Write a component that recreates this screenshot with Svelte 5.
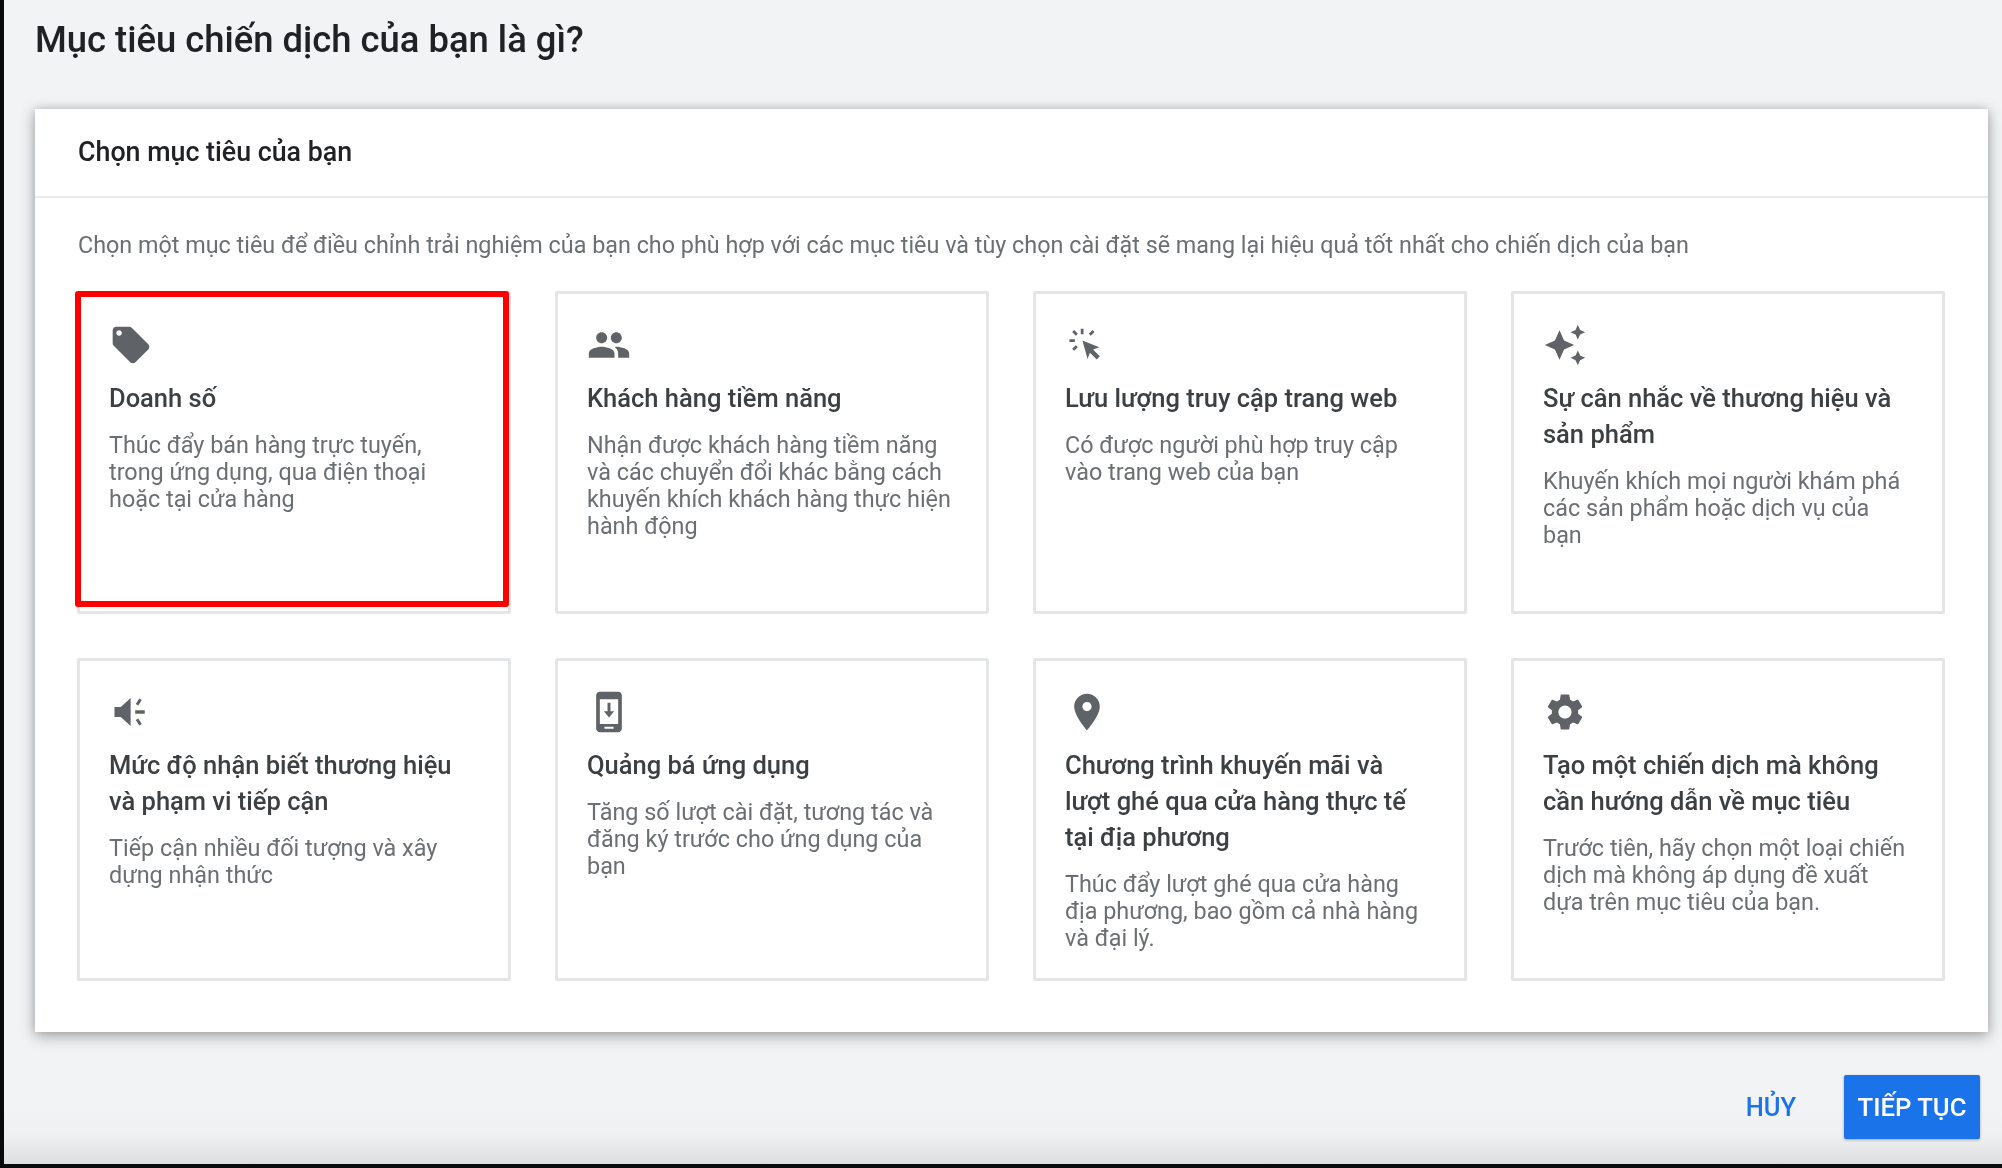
<script lang="ts">
  const goals = [
    {
      title: 'Doanh số',
      desc: 'Thúc đẩy bán hàng trực tuyến, trong ứng dụng, qua điện thoại hoặc tại cửa hàng',
      icon: 'M21.41 11.58l-9-9C12.05 2.22 11.55 2 11 2H4c-1.1 0-2 .9-2 2v7c0 .55.22 1.05.59 1.42l9 9c.36.36.86.58 1.41.58.55 0 1.05-.22 1.41-.59l7-7c.37-.36.59-.86.59-1.41 0-.55-.23-1.06-.59-1.42zM5.5 7C4.67 7 4 6.33 4 5.5S4.67 4 5.5 4 7 4.67 7 5.5 6.33 7 5.5 7z',
      selected: true
    },
    {
      title: 'Khách hàng tiềm năng',
      desc: 'Nhận được khách hàng tiềm năng và các chuyển đổi khác bằng cách khuyến khích khách hàng thực hiện hành động',
      icon: 'M16 11c1.66 0 2.99-1.34 2.99-3S17.66 5 16 5c-1.66 0-3 1.34-3 3s1.34 3 3 3zm-8 0c1.66 0 2.99-1.34 2.99-3S9.66 5 8 5C6.34 5 5 6.34 5 8s1.34 3 3 3zm0 2c-2.33 0-7 1.17-7 3.5V19h14v-2.5c0-2.33-4.67-3.5-7-3.5zm8 0c-.29 0-.62.02-.97.05 1.16.84 1.97 1.97 1.97 3.45V19h6v-2.5c0-2.33-4.67-3.5-7-3.5z'
    },
    {
      title: 'Lưu lượng truy cập trang web',
      desc: 'Có được người phù hợp truy cập vào trang web của bạn',
      icon: 'M9.5 9.5l9.2 3.7-3.4 1.3 3.7 3.7-1.7 1.7-3.7-3.7-1.3 3.4zM8.6 3.2h1.5v3H8.6zM2.4 8.8h3v1.5h-3zM3.9 4.9L5 3.8l2 2-1.1 1.1zM13 5.8l2-2 1.1 1.1-2 2zM3.9 14.1l2-2L7 13.2l-2 2z'
    },
    {
      title: 'Sự cân nhắc về thương hiệu và sản phẩm',
      desc: 'Khuyến khích mọi người khám phá các sản phẩm hoặc dịch vụ của bạn',
      icon: 'M19 9l1.25-2.75L23 5l-2.75-1.25L19 1l-1.25 2.75L15 5l2.75 1.25L19 9zm-7.5.5L9 4 6.5 9.5 1 12l5.5 2.5L9 20l2.5-5.5L17 12l-5.5-2.5zM19 15l-1.25 2.75L15 19l2.75 1.25L19 23l1.25-2.75L23 19l-2.75-1.25L19 15z'
    },
    {
      title: 'Mức độ nhận biết thương hiệu và phạm vi tiếp cận',
      desc: 'Tiếp cận nhiều đối tượng và xây dựng nhận thức',
      icon: 'M3 9.3v5.4h3.4l5.4 5V4.3l-5.4 5zM14.3 11.1h5.2v1.8h-5.2zM14.6 7.6l1.9-3 1.4.9-1.9 3zM14.6 16.4l1.4-.9 1.9 3-1.4.9z'
    },
    {
      title: 'Quảng bá ứng dụng',
      desc: 'Tăng số lượt cài đặt, tương tác và đăng ký trước cho ứng dụng của bạn',
      icon: 'M17 1.01L7 1c-1.1 0-2 .9-2 2v18c0 1.1.9 2 2 2h10c1.1 0 2-.9 2-2V3c0-1.1-.9-1.99-2-1.99zM17 18.5H7V5h10v13.5zM9.5 20h5v1.2h-5zM11.2 7h1.6v4.6h2L12 15l-2.8-3.4h2z'
    },
    {
      title: 'Chương trình khuyến mãi và lượt ghé qua cửa hàng thực tế tại địa phương',
      desc: 'Thúc đẩy lượt ghé qua cửa hàng địa phương, bao gồm cả nhà hàng và đại lý.',
      icon: 'M12 2C8.13 2 5 5.13 5 9c0 5.25 7 13 7 13s7-7.75 7-13c0-3.87-3.13-7-7-7zm0 9.5c-1.38 0-2.5-1.12-2.5-2.5s1.12-2.5 2.5-2.5 2.5 1.12 2.5 2.5-1.12 2.5-2.5 2.5z'
    },
    {
      title: 'Tạo một chiến dịch mà không cần hướng dẫn về mục tiêu',
      desc: 'Trước tiên, hãy chọn một loại chiến dịch mà không áp dụng đề xuất dựa trên mục tiêu của bạn.',
      icon: 'M19.14 12.94c.04-.3.06-.61.06-.94 0-.32-.02-.64-.07-.94l2.03-1.58c.18-.14.23-.41.12-.61l-1.92-3.32c-.12-.22-.37-.29-.59-.22l-2.39.96c-.5-.38-1.03-.7-1.62-.94l-.36-2.54c-.04-.24-.24-.41-.48-.41h-3.84c-.24 0-.43.17-.47.41l-.36 2.54c-.59.24-1.13.57-1.62.94l-2.39-.96c-.22-.08-.47 0-.59.22L2.74 8.87c-.12.21-.08.47.12.61l2.03 1.58c-.05.3-.09.63-.09.94s.02.64.07.94l-2.03 1.58c-.18.14-.23.41-.12.61l1.92 3.32c.12.22.37.29.59.22l2.39-.96c.5.38 1.03.7 1.62.94l.36 2.54c.05.24.24.41.48.41h3.84c.24 0 .44-.17.47-.41l.36-2.54c.59-.24 1.13-.56 1.62-.94l2.39.96c.22.08.47 0 .59-.22l1.92-3.32c.12-.22.07-.47-.12-.61l-2.01-1.58zM12 15.6c-1.98 0-3.6-1.62-3.6-3.6s1.62-3.6 3.6-3.6 3.6 1.62 3.6 3.6-1.62 3.6-3.6 3.6z'
    }
  ];
</script>

<div class="frame">
  <main class="page">
    <h1 class="page-title">Mục tiêu chiến dịch của bạn là gì?</h1>

    <section class="panel">
      <h2 class="panel-title"><span class="soft">Chọn mục tiêu của bạn</span></h2>
      <div class="panel-body">
        <p class="intro">Chọn một mục tiêu để điều chỉnh trải nghiệm của bạn cho phù hợp với các mục tiêu và tùy chọn cài đặt sẽ mang lại hiệu quả tốt nhất cho chiến dịch của bạn</p>
        <div class="goal-grid">
          {#each goals as goal}
            <div class="goal">
              <svg class="goal-icon" viewBox="0 0 24 24" aria-hidden="true"><path d={goal.icon} /></svg>
              <div class="goal-title">{goal.title}</div>
              <div class="goal-desc">{goal.desc}</div>
              {#if goal.selected}
                <div class="highlight"></div>
              {/if}
            </div>
          {/each}
        </div>
      </div>
    </section>

    <div class="actions">
      <button class="btn-cancel"><span class="soft">HỦY</span></button>
      <button class="btn-next"><span class="soft">TIẾP TỤC</span></button>
    </div>
  </main>
</div>

<style>
  :global(body) { margin: 0; background: #0a0a0a; }

  .frame {
    width: 2002px; height: 1168px; box-sizing: border-box;
    padding: 0 0 4px 4px; background: #0a0a0a;
    font-family: Roboto, "Noto Sans", sans-serif;
  }

  .page {
    height: 100%; display: flex; flex-direction: column;
    padding: 0 14px 0 31px; box-sizing: border-box;
    background: linear-gradient(to bottom, #f1f3f4 0, #f1f3f4 1110px, #eff0f2 1135px, #dcdee0 100%);
  }

  /* the reference is a soft upscaled capture, text and icons carry a slight blur */
  .soft, .page-title, .intro, .goal-icon, .goal-title, .goal-desc { filter: blur(0.55px); }
  .soft { display: inline-block; }

  .page-title {
    margin: 0; height: 109px; padding-top: 19px; box-sizing: border-box;
    font-size: 36.4px; font-weight: 500; line-height: 42px; color: #202124;
  }

  .panel {
    height: 923px; background: #ffffff; flex: none;
    box-shadow: 0 4px 14px rgba(60, 64, 67, 0.42), 0 0 8px rgba(60, 64, 67, 0.16);
  }

  .panel-title {
    margin: 0; height: 89px; padding-left: 43px; box-sizing: border-box;
    border-bottom: 2px solid #e8eaed;
    font-size: 26.8px; font-weight: 500; line-height: 87px; color: #202124;
  }

  .panel-body { padding: 31px 43px 0 42px; }

  .intro {
    margin: 0 0 30px 1px; font-size: 23.35px; line-height: 32px; color: #6b6f73; white-space: nowrap;
  }

  .goal-grid {
    display: grid; grid-template-columns: repeat(4, 434px); grid-auto-rows: 323px;
    column-gap: 44px; row-gap: 44px;
  }

  .goal {
    position: relative; box-sizing: border-box; padding: 29px 30px 0 29px;
    border: 3px solid #e4e5e7; border-radius: 2px; background: #ffffff;
  }

  .goal-icon { display: block; width: 44px; height: 44px; margin-bottom: 13px; fill: #5f6368; }

  .goal-title {
    font-size: 25.5px; font-weight: 500; line-height: 36px; color: #3c4043;
    margin-bottom: 16px; padding-right: 8px;
  }

  .goal-desc { font-size: 23.4px; line-height: 27px; color: #6b6f73; }

  .highlight {
    position: absolute; left: -5px; top: -3px; width: 434px; height: 316px;
    box-sizing: border-box; border: 6px solid #ff0000; border-radius: 3px;
  }

  .actions {
    display: flex; justify-content: flex-end; align-items: center; gap: 48px;
    padding: 43px 8px 0 0;
  }

  .btn-cancel {
    border: none; background: none; padding: 0; font: inherit;
    font-size: 25.5px; font-weight: 500; color: #1a73e8;
  }

  .btn-next {
    width: 136px; height: 64px; border: none; border-radius: 2px; padding: 0;
    background: #1a73e8; color: #ffffff; font: inherit; font-size: 25.7px; font-weight: 500;
    box-shadow: 0 1px 3px rgba(60, 64, 67, 0.4);
  }
</style>
